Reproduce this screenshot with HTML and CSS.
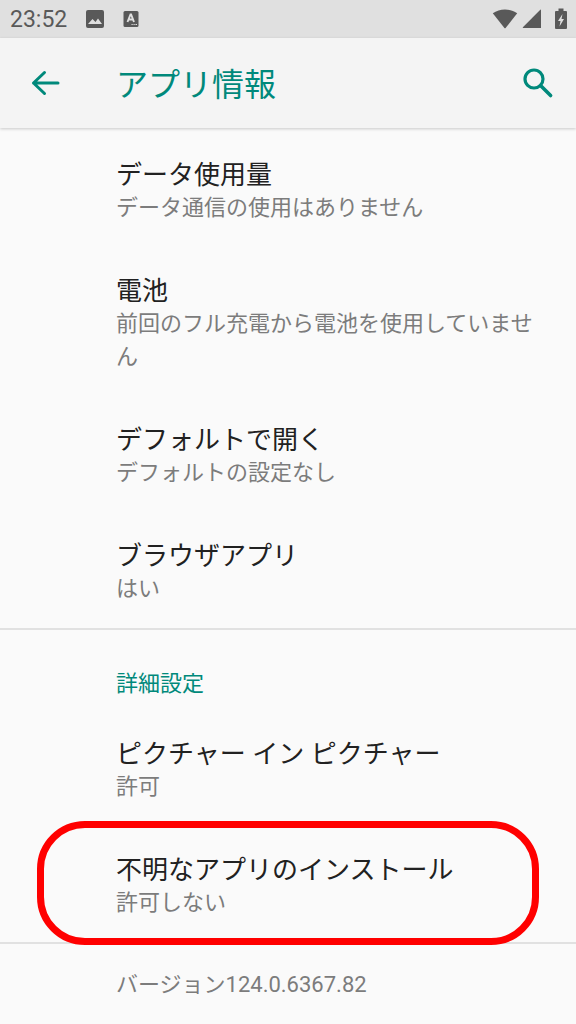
FILE: index.html
```html
<!DOCTYPE html>
<html lang="ja">
<head>
<meta charset="utf-8">
<meta name="viewport" content="width=device-width, initial-scale=1">
<title>アプリ情報</title>
<link rel="stylesheet" href="styles.css">
</head>
<body>
<div class="status-bar">
  <time class="clock">23:52</time>
  <svg class="notice" width="20" height="20" viewBox="0 0 20 20" aria-hidden="true"><path fill="#595959" fill-rule="evenodd" d="M3 1h14a2 2 0 0 1 2 2v14a2 2 0 0 1-2 2H3a2 2 0 0 1-2-2V3a2 2 0 0 1 2-2zM3 15h14l-4-5.500-2.500 3.500L7.500 10z"/></svg>
  <svg class="notice" width="16" height="18" viewBox="0 0 16 18" aria-hidden="true"><rect x="0.500" y="1" width="15" height="16" rx="1.500" fill="#595959"/><path d="M4.500 12 7.500 4.500h.6L11 12M5.600 9.500h4.400" fill="none" stroke="#e0e0e0" stroke-width="1.900"/><path d="M8.500 14.500h1.200m.8 0h1.200m.8 0h1.500" stroke="#e0e0e0" stroke-width="1.200"/></svg>
  <div class="system">
    <svg width="26" height="20" viewBox="0 0 26 20" aria-hidden="true"><path fill="#595959" d="M.8 4.300C4.300 1.800 8.400.5 13 .5s8.700 1.300 12.200 3.800L13.600 19q-.6.700-1.200 0z"/></svg>
    <svg width="20" height="20" viewBox="0 0 20 20" aria-hidden="true"><path fill="#595959" d="M18.300.8q.7-.5.700.4V19H1.300q-1 0-.4-.8z"/></svg>
    <svg class="battery" width="14" height="22" viewBox="0 0 14 22" aria-hidden="true"><path fill="#595959" fill-rule="evenodd" d="M4.500.5h5V3H12q1 0 1 1v16q0 1-1 1H2q-1 0-1-1V4q0-1 1-1h2.500zM8.500 6 4 13h2.500l-1 5.500L10 11H7.500z"/></svg>
  </div>
</div>
<header class="app-bar">
  <button class="icon-button" type="button" aria-label="戻る"><svg width="30" height="28" viewBox="0 0 30 28"><path d="M27 14H2.500M13.500 3.500 2.500 14l11 10.500" fill="none" stroke="#00897b" stroke-width="3" stroke-linecap="round" stroke-linejoin="round"/></svg></button>
  <h1 class="app-title">アプリ情報</h1>
  <button class="icon-button" type="button" aria-label="検索"><svg width="32" height="32" viewBox="0 0 32 32"><circle cx="12" cy="12" r="9" fill="none" stroke="#00897b" stroke-width="3.200"/><path d="m18.800 18.800 9.800 9.800" stroke="#00897b" stroke-width="3.600" stroke-linecap="round"/></svg></button>
</header>
<main>
  <section class="group">
    <div class="row"><h2 class="row-title">データ使用量</h2><p class="summary">データ通信の使用はありません</p></div>
    <div class="row"><h2 class="row-title">電池</h2><p class="summary">前回のフル充電から電池を使用していません</p></div>
    <div class="row"><h2 class="row-title">デフォルトで開く</h2><p class="summary">デフォルトの設定なし</p></div>
    <div class="row"><h2 class="row-title">ブラウザアプリ</h2><p class="summary">はい</p></div>
  </section>
  <section class="group">
    <h2 class="category">詳細設定</h2>
    <div class="row"><h3 class="row-title">ピクチャー イン ピクチャー</h3><p class="summary">許可</p></div>
    <div class="row highlighted"><h3 class="row-title">不明なアプリのインストール</h3><p class="summary">許可しない</p></div>
  </section>
  <footer class="group version"><p class="summary">バージョン124.0.6367.82</p></footer>
</main>
</body>
</html>
```
FILE: styles.css
```css
* { box-sizing: border-box; }

body {
  margin: 0;
  background: #fafafa;
  color: #212121;
  font-family: Roboto, "Noto Sans CJK JP", sans-serif;
}

h1, h2, h3, p { margin: 0; font-weight: 400; }
svg { display: block; }

.status-bar {
  display: flex;
  align-items: center;
  height: 38px;
  padding: 0 8px 0 10px;
  background: #e0e0e0;
}

.clock {
  padding-top: 2px;
  color: #595959;
  font-size: 23px;
  line-height: 32px;
}

.notice { margin-left: 18px; }

.system {
  display: flex;
  align-items: center;
  gap: 4px;
  margin-left: auto;
}

.battery { margin-left: 8px; }

.app-bar {
  display: flex;
  align-items: center;
  height: 90px;
  padding: 0 16px 0 24px;
  background: #f4f4f4;
  box-shadow: 0 1px 3px rgba(0, 0, 0, 0.2);
}

.icon-button {
  display: grid;
  place-items: center;
  width: 44px;
  height: 48px;
  padding: 0;
  border: 0;
  background: none;
}

.app-title {
  flex: 1;
  padding: 3px 0 0 48px;
  color: #00897b;
  font-size: 32px;
  line-height: 48px;
}

.group { padding-top: 3px; }

.group + .group {
  padding-top: 0;
  border-top: 2px solid #e1e1e1;
}

.row {
  padding: 28px 26px 23px 116px;
}

.row-title {
  font-size: 26px;
  line-height: 32px;
}

.summary {
  color: #7c7c7c;
  font-size: 22px;
  line-height: 33px;
}

.category {
  padding: 37px 26px 10px 116px;
  color: #00897b;
  font-size: 22px;
  line-height: 33px;
}

.highlighted { position: relative; }

.highlighted::after {
  content: "";
  position: absolute;
  inset: -5px 37px -3px 37px;
  border: 7px solid #ff0000;
  border-radius: 48px;
  pointer-events: none;
}

.group.version { padding: 24px 26px 23px 116px; }
```
